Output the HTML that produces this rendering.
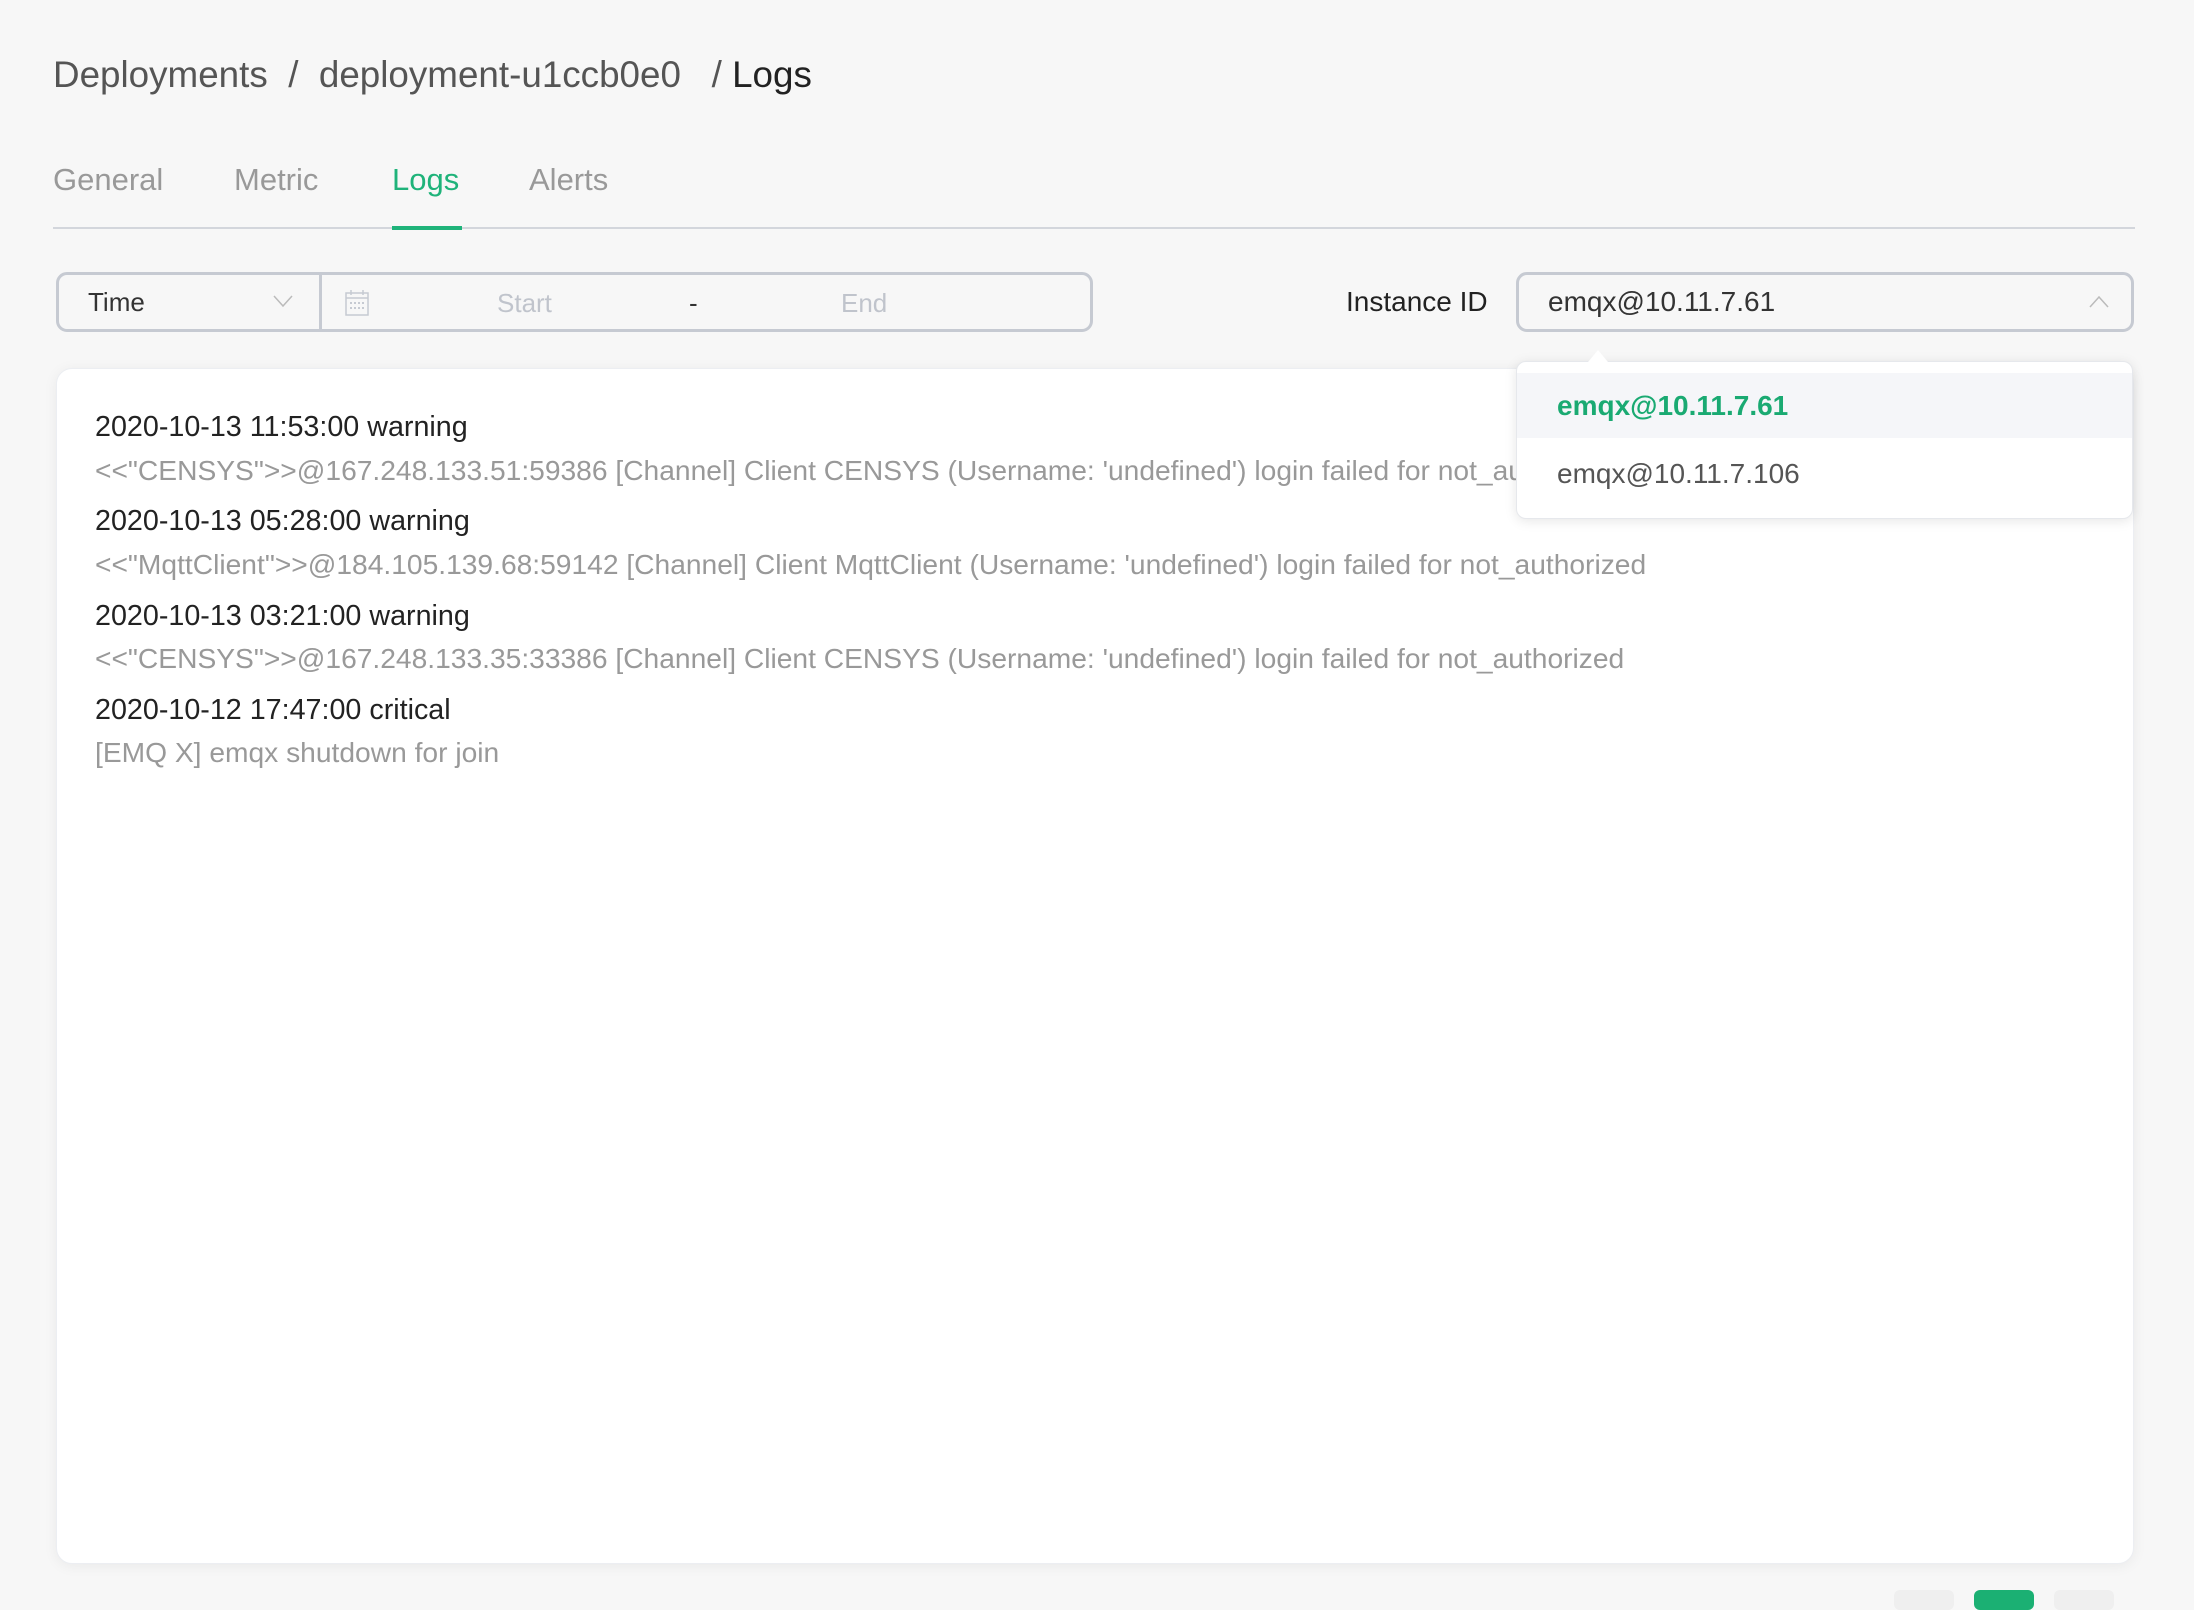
<!DOCTYPE html>
<html><head><meta charset="utf-8"><style>
*{margin:0;padding:0;box-sizing:border-box}
body{width:2194px;height:1600px;background:#f7f7f7;font-family:"Liberation Sans",sans-serif;position:relative;overflow:hidden}
.a{position:absolute;white-space:nowrap}
.bc{top:54px;left:53px;font-size:36.8px;color:#555}
.tab{top:162px;font-size:31px;color:#999}
.box{position:absolute;border:3px solid #c6cad2;border-radius:11px;background:#f7f7f7}
.card{position:absolute;left:56px;top:368px;width:2078px;height:1196px;background:#fff;border-radius:16px;box-shadow:0 2px 14px rgba(0,0,0,0.06);border:1px solid #eceef2}
.t{font-size:28.7px;color:#222;left:95px}
.m{font-size:28.2px;color:#999;left:95px}
</style></head><body>
<div class="a bc">Deployments&nbsp; /&nbsp; deployment-u1ccb0e0 &nbsp;&nbsp;/ <span style="color:#222">Logs</span></div>
<div class="a tab" style="left:53px">General</div>
<div class="a tab" style="left:234px">Metric</div>
<div class="a tab" style="left:392px;color:#1fb37a">Logs</div>
<div class="a tab" style="left:529px">Alerts</div>
<div class="a" style="left:53px;top:227px;width:2082px;height:2px;background:#d3d6dc"></div>
<div class="a" style="left:392px;top:226px;width:70px;height:4px;background:#1fb37a"></div>

<div class="box" style="left:56px;top:272px;width:1037px;height:60px"></div>
<div class="a" style="left:319px;top:274px;width:3px;height:56px;background:#c6cad2"></div>
<div class="a" style="left:88px;top:287px;font-size:26px;color:#333">Time</div>
<svg class="a" style="left:273px;top:294px" width="20" height="14"><path d="M1 2 L10 12 L19 2" fill="none" stroke="#bbb" stroke-width="1.5"/></svg>
<svg class="a" style="left:345px;top:290px" width="24" height="26"><rect x="1" y="3" width="22" height="22" fill="none" stroke="#c6cad2" stroke-width="1.5"/><line x1="1" y1="8" x2="23" y2="8" stroke="#c6cad2" stroke-width="1.5"/><line x1="6" y1="0" x2="6" y2="5" stroke="#c6cad2" stroke-width="1.5"/><line x1="18" y1="0" x2="18" y2="5" stroke="#c6cad2" stroke-width="1.5"/><g fill="#c6cad2"><rect x="5" y="12" width="2" height="2"/><rect x="9" y="12" width="2" height="2"/><rect x="13" y="12" width="2" height="2"/><rect x="17" y="12" width="2" height="2"/><rect x="5" y="17" width="2" height="2"/><rect x="9" y="17" width="2" height="2"/><rect x="13" y="17" width="2" height="2"/><rect x="17" y="17" width="2" height="2"/></g></svg>
<div class="a" style="left:497px;top:288px;font-size:26px;color:#c0c4cc">Start</div>
<div class="a" style="left:689px;top:288px;font-size:26px;color:#333">-</div>
<div class="a" style="left:841px;top:288px;font-size:26px;color:#c0c4cc">End</div>

<div class="a" style="left:1346px;top:286px;font-size:28px;color:#222">Instance ID</div>
<div class="box" style="left:1516px;top:272px;width:618px;height:60px"></div>
<div class="a" style="left:1548px;top:286px;font-size:28px;color:#333">emqx@10.11.7.61</div>
<svg class="a" style="left:2089px;top:295px" width="20" height="14"><path d="M1 12 L10 2 L19 12" fill="none" stroke="#bbb" stroke-width="1.5"/></svg>

<div class="card"></div>
<div class="a t" style="top:411px">2020-10-13 11:53:00 warning</div>
<div class="a m" style="top:454px">&lt;&lt;"CENSYS"&gt;&gt;@167.248.133.51:59386 [Channel] Client CENSYS (Username: 'undefined') login failed for not_authorized</div>
<div class="a t" style="top:505px">2020-10-13 05:28:00 warning</div>
<div class="a m" style="top:548px">&lt;&lt;"MqttClient"&gt;&gt;@184.105.139.68:59142 [Channel] Client MqttClient (Username: 'undefined') login failed for not_authorized</div>
<div class="a t" style="top:600px">2020-10-13 03:21:00 warning</div>
<div class="a m" style="top:642px">&lt;&lt;"CENSYS"&gt;&gt;@167.248.133.35:33386 [Channel] Client CENSYS (Username: 'undefined') login failed for not_authorized</div>
<div class="a t" style="top:694px">2020-10-12 17:47:00 critical</div>
<div class="a m" style="top:736px">[EMQ X] emqx shutdown for join</div>

<div class="a" style="left:1516px;top:361px;width:617px;height:158px;background:#fff;border-radius:10px;box-shadow:0 2px 12px rgba(0,0,0,0.1);border:1px solid #e6e8ec"></div>
<div class="a" style="left:1588px;top:350px;width:0;height:0;border-left:10px solid transparent;border-right:10px solid transparent;border-bottom:12px solid #fff"></div>
<div class="a" style="left:1517px;top:373px;width:615px;height:65px;background:#f5f6f9"></div>
<div class="a" style="left:1557px;top:390px;font-size:28px;color:#1aaa72;font-weight:bold">emqx@10.11.7.61</div>
<div class="a" style="left:1557px;top:458px;font-size:28px;color:#555">emqx@10.11.7.106</div>

<div class="a" style="left:1894px;top:1590px;width:60px;height:20px;background:#efefef;border-radius:6px"></div>
<div class="a" style="left:1974px;top:1590px;width:60px;height:20px;background:#1bb073;border-radius:6px"></div>
<div class="a" style="left:2054px;top:1590px;width:60px;height:20px;background:#efefef;border-radius:6px"></div>
</body></html>
